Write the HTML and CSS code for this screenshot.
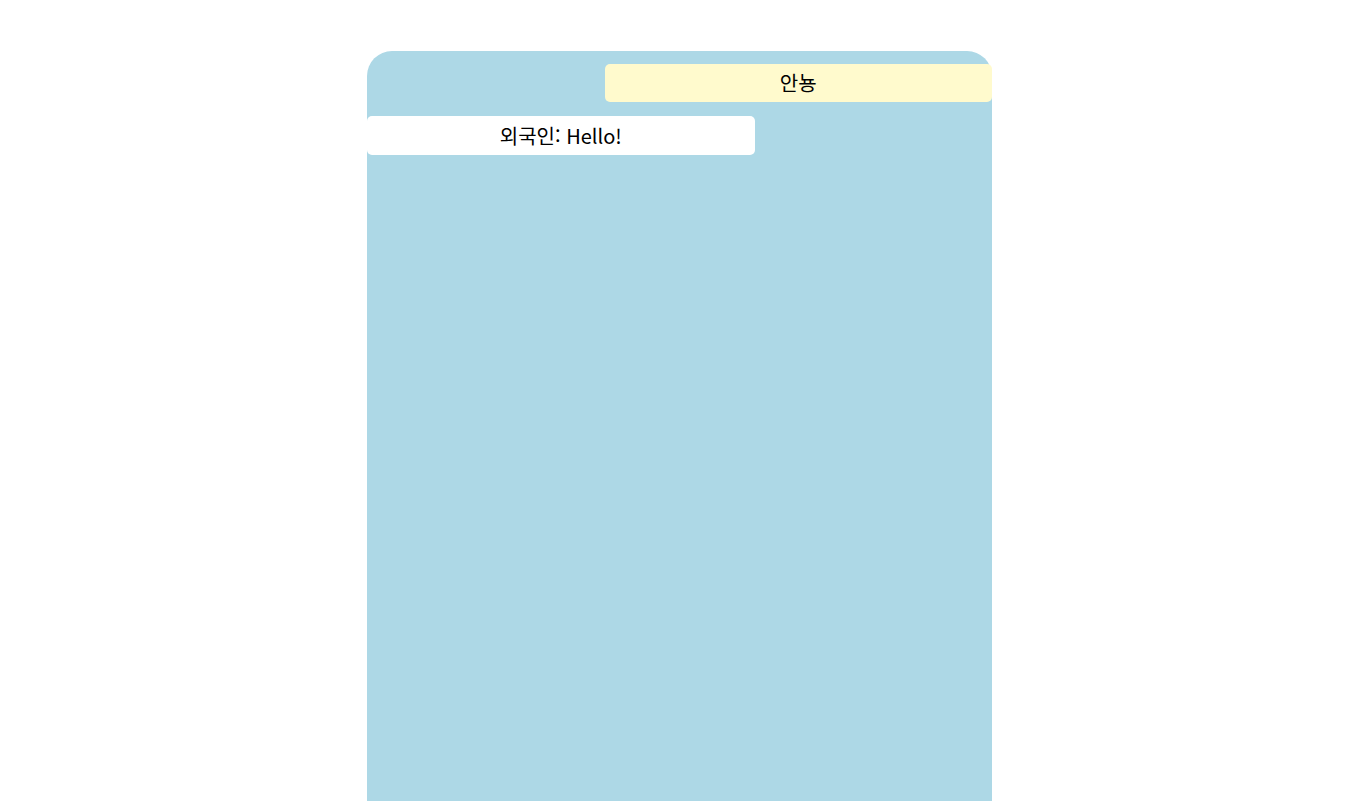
FILE: index.html
```html
<!DOCTYPE html>
<html lang="ko">
<head>
<meta charset="utf-8">
<title>Chat</title>
<link rel="stylesheet" href="styles.css">
</head>
<body>
<div class="chat">
  <div class="msg mine">안뇽</div>
  <div class="msg other">외국인: Hello!</div>
</div>
</body>
</html>
```

FILE: styles.css
```css
html, body {
  margin: 0;
  padding: 0;
  background: #ffffff;
  overflow: hidden;
}
body {
  font-family: "Noto Sans CJK KR", "Noto Sans", sans-serif;
  font-size: 20px;
  color: #000000;
}
.chat {
  width: 625px;
  height: 750px;
  margin: 51px 0 0 367px;
  background: #add8e6;
  border-radius: 25px 25px 0 0;
  padding-top: 13px;
  box-sizing: border-box;
  display: flex;
  flex-direction: column;
  gap: 14px;
}
.msg {
  width: 62%;
  height: 38px;
  box-sizing: border-box;
  border-radius: 5px;
  display: flex;
  align-items: center;
  justify-content: center;
  line-height: 1;
}
.mine {
  align-self: flex-end;
  background: #fffacd;
}
.other {
  align-self: flex-start;
  background: #ffffff;
  height: 39px;
}
```
